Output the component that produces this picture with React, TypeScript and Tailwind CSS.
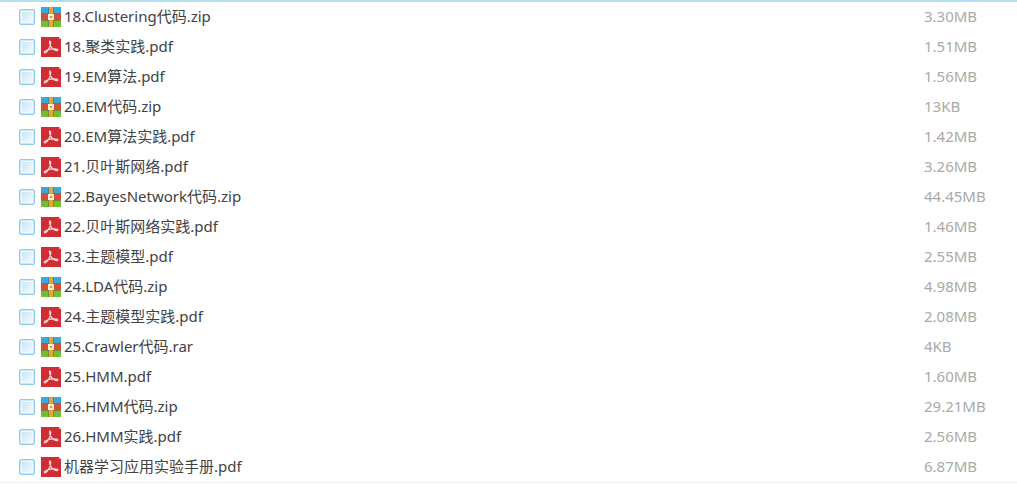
import { useState } from "react";

type FileKind = "archive" | "pdf";

interface FileEntry {
  name: string;
  size: string;
  kind: FileKind;
}

const FILES: FileEntry[] = [
  { name: "18.Clustering代码.zip",    size: "3.30MB",  kind: "archive" },
  { name: "18.聚类实践.pdf",          size: "1.51MB",  kind: "pdf" },
  { name: "19.EM算法.pdf",            size: "1.56MB",  kind: "pdf" },
  { name: "20.EM代码.zip",            size: "13KB",    kind: "archive" },
  { name: "20.EM算法实践.pdf",        size: "1.42MB",  kind: "pdf" },
  { name: "21.贝叶斯网络.pdf",        size: "3.26MB",  kind: "pdf" },
  { name: "22.BayesNetwork代码.zip",  size: "44.45MB", kind: "archive" },
  { name: "22.贝叶斯网络实践.pdf",    size: "1.46MB",  kind: "pdf" },
  { name: "23.主题模型.pdf",          size: "2.55MB",  kind: "pdf" },
  { name: "24.LDA代码.zip",           size: "4.98MB",  kind: "archive" },
  { name: "24.主题模型实践.pdf",      size: "2.08MB",  kind: "pdf" },
  { name: "25.Crawler代码.rar",       size: "4KB",     kind: "archive" },
  { name: "25.HMM.pdf",               size: "1.60MB",  kind: "pdf" },
  { name: "26.HMM代码.zip",           size: "29.21MB", kind: "archive" },
  { name: "26.HMM实践.pdf",           size: "2.56MB",  kind: "pdf" },
  { name: "机器学习应用实验手册.pdf", size: "6.87MB",  kind: "pdf" },
];

// ── Icons ─────────────────────────────────────────────────────────────────────

function FileIcon({ kind }: { kind: FileKind }) {
  switch (kind) {
    case "archive": return (
      <svg width="20" height="20" viewBox="0 0 20 20" className="shrink-0" aria-hidden="true">
        <path d="M0 0h20v7H0z" fill="#36a9dd" />
        <path d="M0 7h20v6H0z" fill="#d24f36" />
        <path d="M0 13h20v7H0z" fill="#72bd35" />
        <path d="M0 6.5h20" stroke="#6b5560" strokeOpacity="0.6" />
        <path d="M0 13.5h20" stroke="#7a5a2c" strokeOpacity="0.6" />
        <path d="M8 0h4v20H8z" fill="#eba236" />
        <path d="M7.5 0v20M12.5 0v20" stroke="#5c5a3c" strokeOpacity="0.4" />
        <path d="M7 7h6v6H7z" fill="#fdf0d8" />
        <path d="M9 9h2v2H9z" fill="#e0902f" />
      </svg>
    );
    case "pdf": return (
      <svg width="20" height="20" viewBox="0 0 20 20" className="shrink-0" aria-hidden="true">
        <path d="M0 0h18l2 2v18H0z" fill="#d02c33" />
        <path d="M18 0l2 2h-2z" fill="#f0b4b6" />
        <path
          d="M8.500 4.200c1.200-.3 1.300.8 1.200 2.300C9.500 9.500 6.500 14.800 4.500 15.700c-1.200.5-1.800-.7-.6-1.500 2.900-1.800 8.300-2.700 11.900-2 1.700.4 1.200 1.700-.3 1.400-2.700-.5-5.900-3.400-6.700-6.600-.3-1.200-.6-2.600-.3-2.800z"
          fill="none"
          stroke="#f8dadb"
          strokeWidth="1.200"
        />
      </svg>
    );
  }
}

// ── Row ───────────────────────────────────────────────────────────────────────

interface RowProps {
  file: FileEntry;
  checked: boolean;
  onToggle: () => void;
}

function FileRow({ file, checked, onToggle }: RowProps) {
  return (
    <tr className="h-[30px]">
      <td className="p-0 pl-[19px]">
        <label className="flex items-center">
          <input
            type="checkbox"
            checked={checked}
            onChange={onToggle}
            className="size-4 shrink-0 appearance-none rounded-xs border border-[#8fcbe8] bg-linear-to-br from-[#c4e1f1] to-[#f8fcfe] shadow-[inset_0_0_0_1px_#c9e9f8,inset_0_0_0_2px_#f2fafe] checked:bg-[#2ba3dc] checked:bg-none"
          />
          <span className="ml-1.5 flex">
            <FileIcon kind={file.kind} />
          </span>
          <span className="ml-[3px] pb-0.5 whitespace-nowrap">{file.name}</span>
        </label>
      </td>
      <td className="w-[93px] p-0 pb-0.5 text-[#aaaaaa]">{file.size}</td>
    </tr>
  );
}

export default function App() {
  const [selected, setSelected] = useState<string[]>([]);

  function toggle(name: string) {
    setSelected((prev) =>
      prev.includes(name) ? prev.filter((n) => n !== name) : [...prev, name]
    );
  }

  return (
    <main className="border-t-2 border-b border-t-[#b3dcec] border-b-[#f0f0f0] bg-white font-['Noto_Sans','Noto_Sans_CJK_SC',sans-serif] text-[15px] leading-5 text-[#424242]">
      <table className="w-full border-collapse">
        <tbody>
          {FILES.map((file) => (
            <FileRow
              key={file.name}
              file={file}
              checked={selected.includes(file.name)}
              onToggle={() => toggle(file.name)}
            />
          ))}
        </tbody>
      </table>
    </main>
  );
}
